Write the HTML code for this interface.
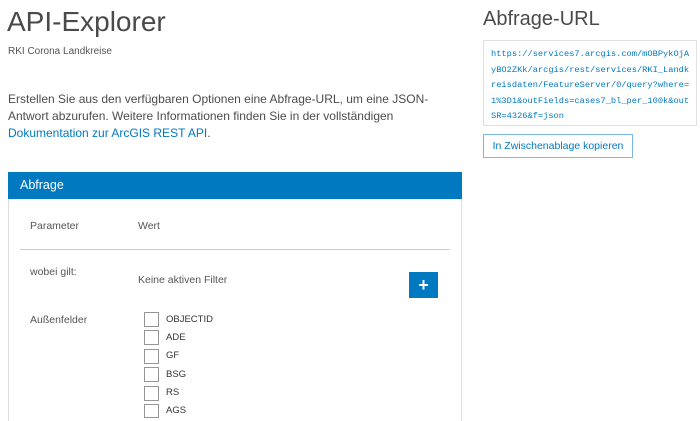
<!DOCTYPE html>
<html style="overflow:hidden;height:421px"><head><style>
body{margin:0;width:700px;height:421px;overflow:hidden;background:#fff;font-family:"Liberation Sans",sans-serif;color:#4c4c4c;position:relative}
.a{position:absolute;white-space:nowrap}
.cb{position:absolute;left:144px;width:13px;height:13px;border:1px solid #959595;background:#fff}
.lb{position:absolute;left:166px;font-size:9.5px;color:#333}
</style></head><body>
<div class="a" style="left:7px;top:6px;font-size:28px;color:#4a4a4a">API-Explorer</div>
<div class="a" style="left:8px;top:46px;font-size:10px;color:#555">RKI Corona Landkreise</div>
<div class="a" style="left:8px;top:91px;font-size:12px;line-height:17px;color:#4c4c4c">Erstellen Sie aus den verfügbaren Optionen eine Abfrage-URL, um eine JSON-<br>Antwort abzurufen. Weitere Informationen finden Sie in der vollständigen<br><span style="color:#0079c1">Dokumentation zur ArcGIS REST API</span>.</div>
<div style="position:absolute;left:8px;top:172px;width:452px;height:260px;border-left:1px solid #ddd;border-right:1px solid #ddd;height:249px"></div>
<div class="a" style="left:8px;top:172px;width:454px;height:27px;background:#0079c1;color:#fff;font-size:12.5px;line-height:27px;text-indent:12px">Abfrage</div>
<div class="a" style="left:30px;top:220px;font-size:10.5px;color:#555">Parameter</div>
<div class="a" style="left:138px;top:220px;font-size:10.5px;color:#555">Wert</div>
<div class="a" style="left:20px;top:249px;width:430px;height:1px;background:#ccc"></div>
<div class="a" style="left:30px;top:266px;font-size:10.5px;color:#555">wobei gilt:</div>
<div class="a" style="left:138px;top:274px;font-size:10.5px;color:#555">Keine aktiven Filter</div>
<div class="a" style="left:409px;top:272px;width:29px;height:26px;background:#0079c1;color:#fff;font-size:18px;font-weight:bold;text-align:center;line-height:26px">+</div>
<div class="a" style="left:30px;top:314px;font-size:10.5px;color:#555">Außenfelder</div>
<div class="cb" style="top:312px"></div><div class="lb" style="top:314px">OBJECTID</div>
<div class="cb" style="top:330px"></div><div class="lb" style="top:332px">ADE</div>
<div class="cb" style="top:349px"></div><div class="lb" style="top:350px">GF</div>
<div class="cb" style="top:367px"></div><div class="lb" style="top:369px">BSG</div>
<div class="cb" style="top:386px"></div><div class="lb" style="top:387px">RS</div>
<div class="cb" style="top:404px;height:12px"></div><div class="lb" style="top:405px">AGS</div>
<div class="a" style="left:483px;top:8px;font-size:20px;color:#4a4a4a">Abfrage-URL</div>
<div class="a" style="left:483px;top:40px;width:214px;height:86px;border:1px solid #e0e0e0;box-sizing:border-box;padding:6px 0 0 7px;font-family:'Liberation Mono',monospace;font-size:8.7px;line-height:15.5px;color:#0079c1;white-space:pre">https://services7.arcgis.com/mOBPykOjA
yBO2ZKk/arcgis/rest/services/RKI_Landk
reisdaten/FeatureServer/0/query?where=
1%3D1&amp;outFields=cases7_bl_per_100k&amp;out
SR=4326&amp;f=json</div>
<div class="a" style="left:483px;top:134px;width:150px;height:24px;border:1px solid #7cb8e0;box-sizing:border-box;color:#0079c1;font-size:10.5px;line-height:22px;text-align:center">In Zwischenablage kopieren</div>
</body></html>
